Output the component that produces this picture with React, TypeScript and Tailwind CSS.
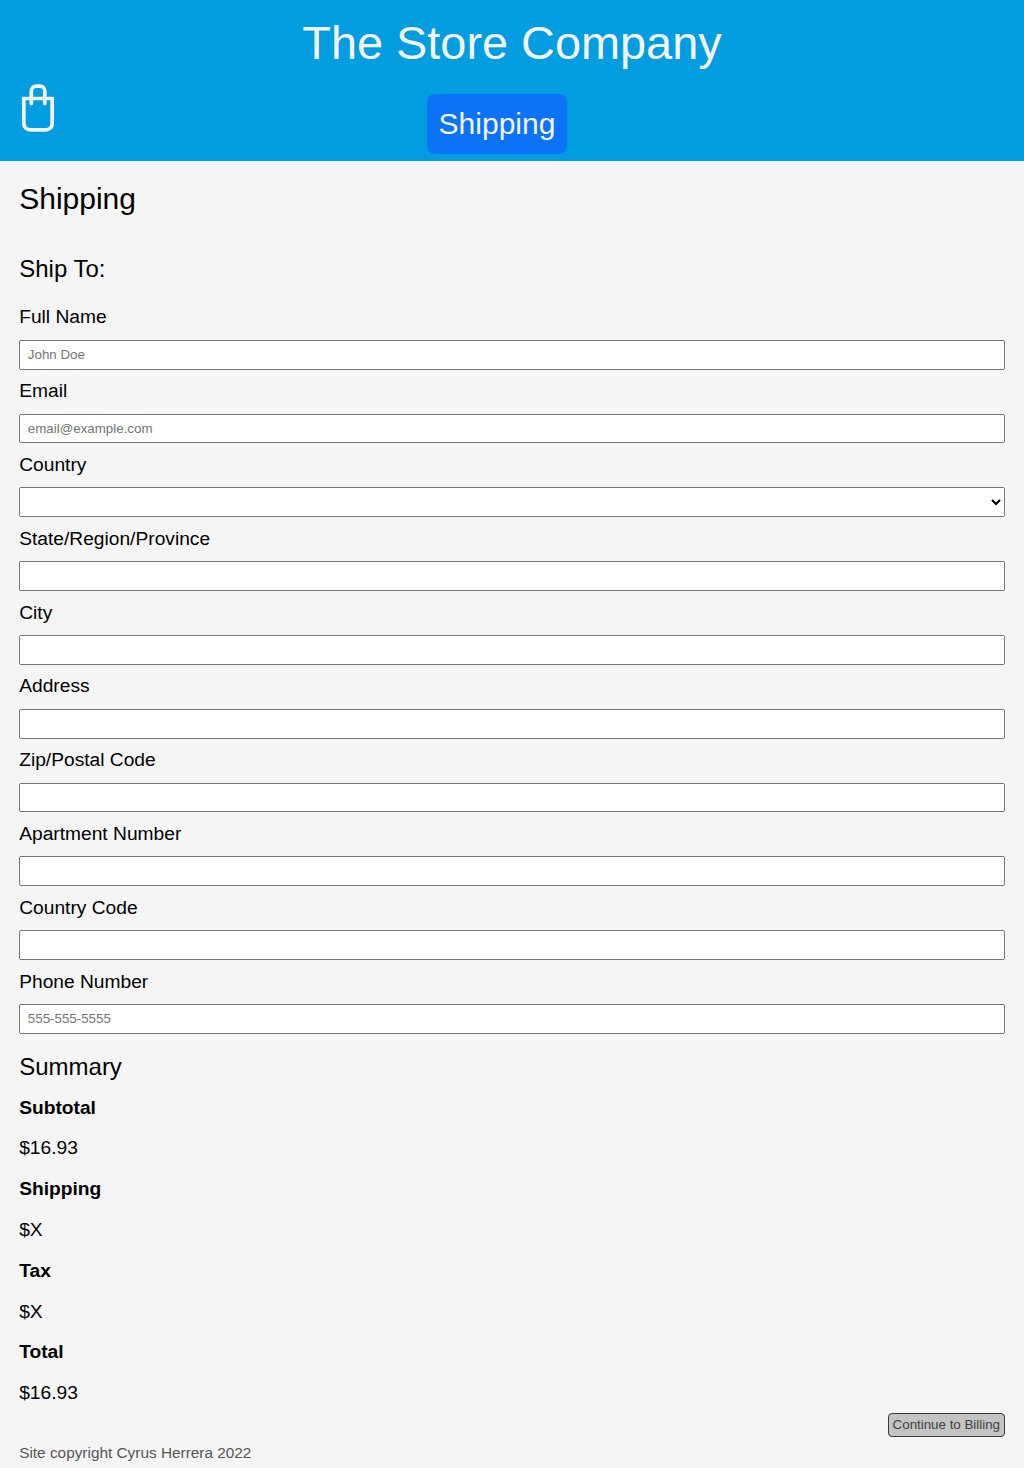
type Field = { label: string; placeholder?: string; select?: boolean };

const fields: Field[] = [
  { label: "Full Name", placeholder: "John Doe" },
  { label: "Email", placeholder: "email@example.com" },
  { label: "Country", select: true },
  { label: "State/Region/Province" },
  { label: "City" },
  { label: "Address" },
  { label: "Zip/Postal Code" },
  { label: "Apartment Number" },
  { label: "Country Code" },
  { label: "Phone Number", placeholder: "555-555-5555" },
];

const summary = [
  ["Subtotal", "$16.93"],
  ["Shipping", "$X"],
  ["Tax", "$X"],
  ["Total", "$16.93"],
];

function BagIcon() {
  return (
    <svg
      width="36"
      height="50"
      viewBox="0 0 36 50"
      fill="none"
      stroke="#f5f5f5"
      strokeWidth="3.7"
      strokeLinecap="round"
      strokeLinejoin="miter"
    >
      <path d="M3.8 15.5H32.2V40.5A6.4 6.4 0 0 1 25.8 46.9H10.2A6.4 6.4 0 0 1 3.8 40.5Z" />
      <path d="M11.3 20.5V8A4.9 4.9 0 0 1 16.2 3.1H19.9A4.9 4.9 0 0 1 24.8 8V20.5" />
    </svg>
  );
}

function FormField({ label, placeholder, select }: Field) {
  return (
    <label className="block h-[73.8px]">
      <span className="block h-[44.2px] pt-[0.8px] leading-[41px]">{label}</span>
      {select ? (
        <select className="block h-[29.8px] w-full appearance-auto font-['Liberation_Sans',sans-serif] text-[13.333px] [background:revert] [border-radius:revert] [border:revert]">
          <option></option>
        </select>
      ) : (
        <input
          className="block h-[29.8px] w-full px-[6.67px] text-[13.333px] [background:revert] [border-radius:revert] [border:revert] placeholder:text-[#757575]"
          placeholder={placeholder}
        />
      )}
    </label>
  );
}

export default function App() {
  return (
    <div className="flex h-[1468px] flex-col overflow-hidden bg-[#f5f5f5] font-['Liberation_Sans',Arial,sans-serif] text-[19.2px] text-black">
      <header className="flex h-[161px] shrink-0 flex-col bg-[#009de1] text-[#f5f5f5]">
        <h1 className="h-[83px] text-center text-[46.87px] leading-[86px]">The Store Company</h1>
        <div className="flex items-start pl-[20px]">
          <div className="w-[407px]">
            <BagIcon />
          </div>
          <a className="mt-[11px] h-[60px] w-[140px] rounded-[8px] bg-[#0c73f9] text-center text-[30px] leading-[60px]">
            Shipping
          </a>
        </div>
      </header>
      <main className="px-[19.2px]">
        <h2 className="h-[76px] text-[30px] leading-[76px]">Shipping</h2>
        <h3 className="h-[58.6px] text-[24px] leading-[64px]">Ship To:</h3>
        <form>
          {fields.map((field) => (
            <FormField key={field.label} {...field} />
          ))}
        </form>
        <h3 className="h-[54.05px] text-[24px] leading-[66px]">Summary</h3>
        <dl>
          {summary.map(([name, value]) => (
            <div key={name}>
              <dt className="h-[40.8px] font-bold leading-[40.8px]">{name}</dt>
              <dd className="h-[40.8px] leading-[40.8px]">{value}</dd>
            </div>
          ))}
        </dl>
        <div className="-mt-[1.05px] flex justify-end">
          <button className="h-[24px] w-[117px] rounded-[4px] border border-[#3a3a3a] bg-[#c4c4c4] text-[13.333px] leading-[22px] text-[#3f3f3f]">
            Continue to Billing
          </button>
        </div>
      </main>
      <footer className="px-[19.2px] text-[15.36px] leading-[32px] text-[#555555]">
        Site copyright Cyrus Herrera 2022
      </footer>
    </div>
  );
}
